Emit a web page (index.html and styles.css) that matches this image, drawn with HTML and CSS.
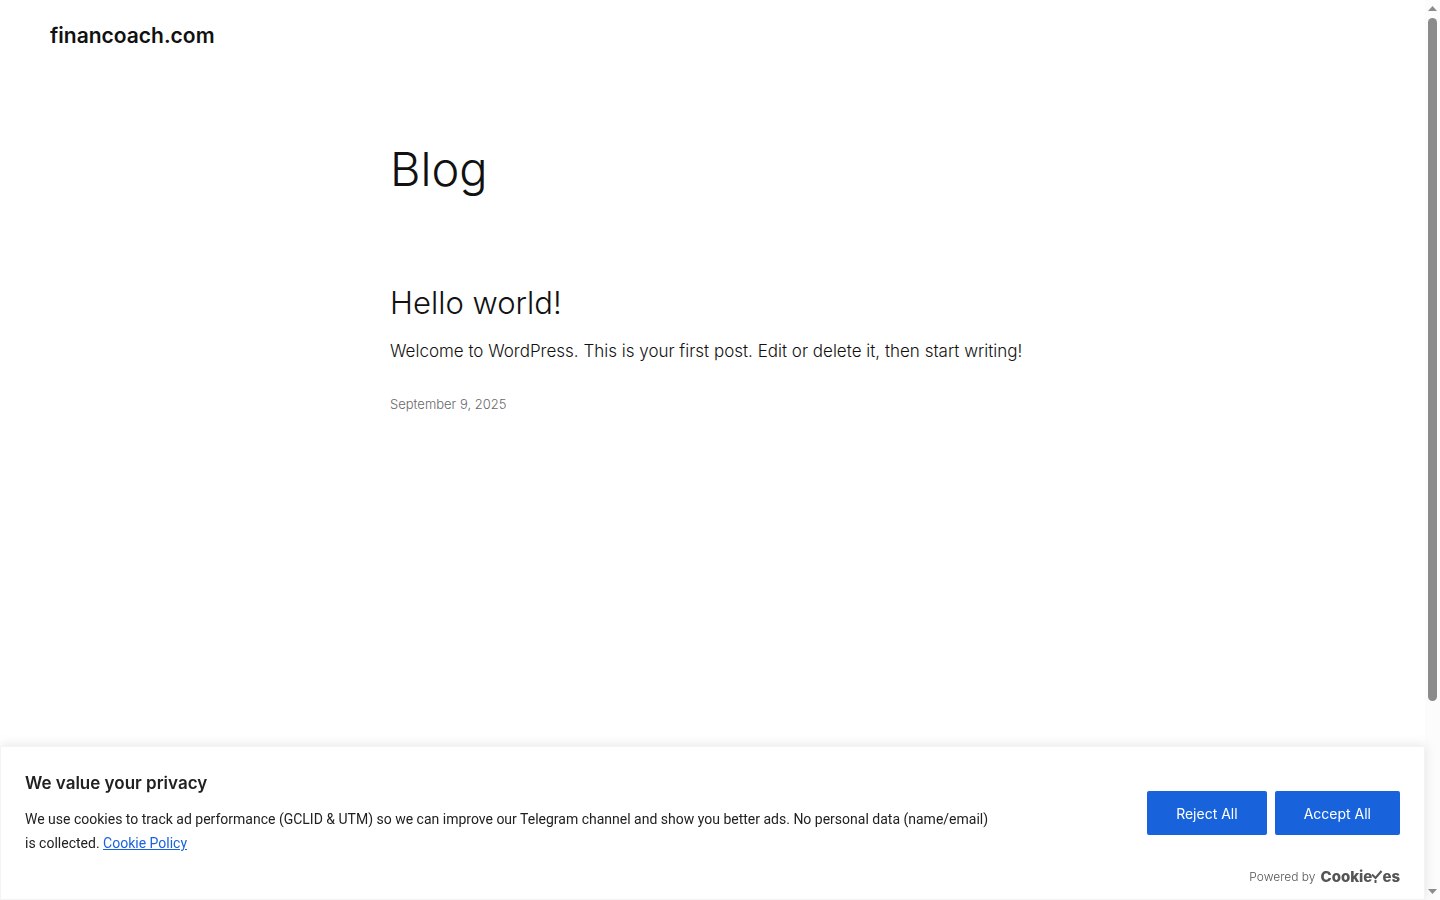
FILE: index.html
```html
<!DOCTYPE html>
<html lang="en">
  <head>
    <meta charset="UTF-8" />
    <meta name="viewport" content="width=device-width, initial-scale=1.0" />
    <title>Blog - financoach.com</title>
    <link rel="stylesheet" href="styles.css">
  </head>
  <body>
    <div class="page">
      <!-- header start -->
      <header class="site-header">
        <a class="site-title" href="#">financoach.com</a>
      </header>
      <!-- header end -->
      <!-- posts start -->
      <main class="content">
        <h1 class="page-title">Blog</h1>
        <article class="post">
          <h2 class="post-title"><a href="#">Hello world!</a></h2>
          <p class="post-text">Welcome to WordPress. This is your first post. Edit or delete it, then start writing!</p>
          <a class="post-date" href="#"><time datetime="2025-09-09">September 9, 2025</time></a>
        </article>
      </main>
      <!-- posts end -->
    </div>

    <!-- scrollbar -->
    <div class="scrollbar" aria-hidden="true">
      <svg class="arrow" viewBox="0 0 9 5"><path d="M0 5 4.500 0 9 5z" /></svg>
      <div class="track"><div class="thumb"></div></div>
      <svg class="arrow" viewBox="0 0 9 5"><path d="M0 0h9L4.500 5z" /></svg>
    </div>

    <!-- cookie banner start -->
    <section class="banner" aria-labelledby="banner-title">
      <div class="banner-main">
        <div class="banner-text">
          <h2 class="banner-title" id="banner-title">We value your privacy</h2>
          <p>We use cookies to track ad performance (GCLID &amp; UTM) so we can improve our Telegram channel and show you better ads. No personal data (name/email) is&nbsp;collected. <a class="policy" href="#">Cookie Policy</a></p>
        </div>
        <div class="banner-buttons">
          <button class="btn" type="button">Reject All</button>
          <button class="btn" type="button">Accept All</button>
        </div>
      </div>
      <div class="powered">
        <span>Powered by</span>
        <a class="brand" href="#" aria-label="CookieYes">
          <span>Cookie</span><svg class="tick" viewBox="0 0 12 16"><path d="M1 5.500 4.500 9 10.500 2" /><path d="M4.500 11v3" /></svg><span>es</span>
        </a>
      </div>
    </section>
    <!-- cookie banner end -->
  </body>
</html>
```

FILE: styles.css
```css
*{
    padding: 0;
    margin: 0;
    box-sizing: border-box;
}
body{
    display: flex;
    height: 100vh;
    overflow: hidden;
    background: #fff;
    color: #111;
    font-family: Inter, "Liberation Sans", sans-serif;
    font-weight: 300;
}
a{
    color: inherit;
    text-decoration: none;
}
.page{
    flex: 1;
}
.site-header{
    padding: 20px 50px;
    line-height: 31px;
}
.site-title{
    font-size: 21px;
    font-weight: 600;
}
.content{
    max-width: 645px;
    margin: 69px auto 0;
}
.page-title{
    font-size: 47px;
    font-weight: 300;
    line-height: 54px;
}
.post{
    margin-top: 89px;
}
.post-title{
    font-size: 31px;
    font-weight: 300;
    line-height: 36px;
}
.post-text{
    margin: 18px 0 26px;
    font-size: 17px;
    line-height: 25px;
}
.post-date{
    display: block;
    font-size: 13px;
    line-height: 28px;
    color: #686868;
}
/* scrollbar */
.scrollbar{
    width: 15px;
    padding: 6px 3px;
    display: flex;
    flex-direction: column;
    align-items: center;
    gap: 7px;
    background: #fcfcfc;
}
.arrow{
    width: 9px;
    height: 5px;
    fill: #8b8b8b;
}
.track{
    flex: 1;
    width: 9px;
}
.thumb{
    height: 79%;
    border-radius: 5px;
    background: #8b8b8b;
}
/* cookie banner */
.banner{
    position: fixed;
    left: 0;
    right: 15px;
    bottom: 0;
    padding: 24px 24px 12px;
    border: 1px solid #f4f4f4;
    background: #fff;
    color: #212121;
    box-shadow: 0 -1px 10px 0 #acabab4d;
}
.banner-main{
    display: flex;
    justify-content: space-between;
    align-items: center;
}
.banner-text{
    max-width: 980px;
    line-height: 24px;
}
.banner-text p{
    font-family: Roboto, "Liberation Sans", sans-serif;
    font-size: 14px;
    font-weight: 400;
}
.banner-title{
    margin-bottom: 12px;
    font-size: 17px;
    font-weight: 600;
}
.policy{
    color: #1863dc;
    text-decoration: underline;
}
.banner-buttons{
    display: flex;
    gap: 8px;
}
.btn{
    height: 44px;
    padding: 0 27px;
    border: 2px solid #1863dc;
    border-radius: 2px;
    background: #1863dc;
    color: #fff;
    font-family: inherit;
    font-size: 14px;
    font-weight: 400;
}
.powered{
    margin-top: 12px;
    display: flex;
    justify-content: flex-end;
    align-items: center;
    gap: 5px;
    font-size: 12px;
    line-height: 20px;
    color: #555;
}
.brand{
    display: flex;
    align-items: center;
    font-size: 15px;
    font-weight: 800;
}
.tick{
    width: 12px;
    height: 16px;
    margin: 0 -1px;
    fill: none;
    stroke: #555;
    stroke-width: 2;
}
```
